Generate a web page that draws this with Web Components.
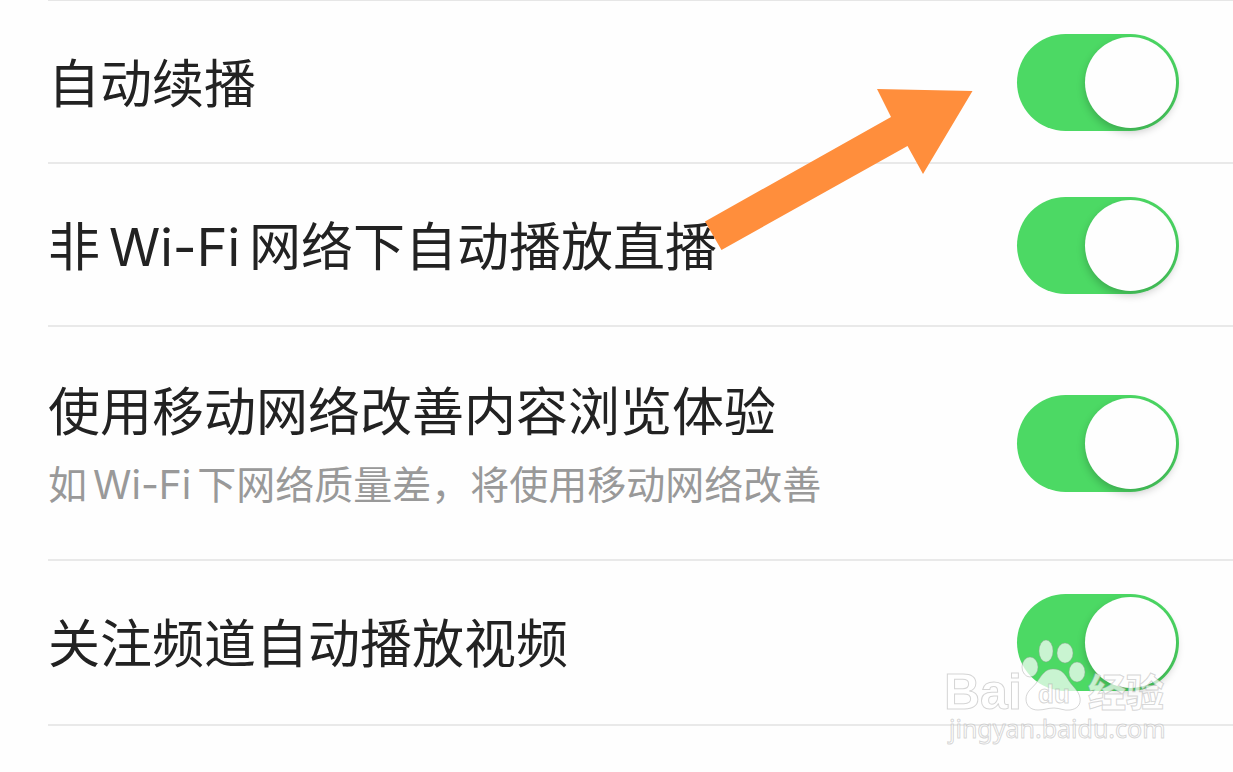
<!DOCTYPE html>
<html lang="zh-CN">
<head>
<meta charset="utf-8">
<meta name="viewport" content="width=device-width, initial-scale=1">
<title>播放设置</title>
<style>
  body { margin: 0; background: #fefefe; color: #222; font-family: Inter, "Noto Sans CJK SC", sans-serif; }
</style>
</head>
<body>
<settings-page>
  <setting-row>自动续播</setting-row>
  <setting-row>非<latin-word>Wi-Fi</latin-word>网络下自动播放直播</setting-row>
  <setting-row size="tall">使用移动网络改善内容浏览体验<span slot="note">如<latin-word>Wi-Fi</latin-word>下网络质量差，将使用移动网络改善</span></setting-row>
  <setting-row>关注频道自动播放视频</setting-row>
  <pointer-arrow slot="overlay"></pointer-arrow>
  <site-watermark slot="overlay"></site-watermark>
</settings-page>

<script>
function define(name, html) {
  const template = document.createElement('template');
  template.innerHTML = html.trim();
  customElements.define(name, class extends HTMLElement {
    constructor() {
      super();
      this.attachShadow({ mode: 'open' }).append(template.content.cloneNode(true));
    }
  });
}

define('settings-page', `
  <style>
    :host { display: block; position: relative; overflow: hidden; }
    main { display: flex; flex-direction: column; margin-left: 48px; padding-bottom: 24px; border-top: 1px solid #e6e6e6; }
  </style>
  <main><slot></slot></main>
  <slot name="overlay"></slot>
`);

define('latin-word', `<style>:host { display: inline; margin: 0 var(--latin-gap, 9px); }</style><slot></slot>`);

define('setting-row', `
  <style>
    :host { display: block; border-bottom: 2px solid #e9e9e9; }
    label { display: flex; align-items: center; justify-content: space-between; gap: 24px; box-sizing: border-box; min-height: 161px; padding: 2px 54px 0 0; }
    :host([size="tall"]) label { min-height: 232px; padding-top: 0; }
    :host(:last-of-type) label { min-height: 163px; padding-top: 0; }
    .text { display: flex; flex-direction: column; padding-top: 4px; }
    .title { font-size: 52px; line-height: 72px; }
    .note { font-size: 39px; line-height: 56px; color: #999; --latin-gap: 6px; }
    ::slotted([slot="note"]) { display: block; padding-top: 8px; }
    input {
      appearance: none; flex: none; display: flex; justify-content: flex-end;
      box-sizing: border-box; width: 162px; height: 97px; margin: 0; padding: 3px;
      border-radius: 49px; background: #ddd;
    }
    input::before {
      content: ""; width: 91px; height: 91px; border-radius: 50%; background: #fefefe;
      box-shadow: 0 4px 8px rgba(0, 0, 0, .22);
    }
    input:checked { background: #4cd964; }
    input:not(:checked) { justify-content: flex-start; }
  </style>
  <label>
    <span class="text">
      <span class="title"><slot></slot></span>
      <span class="note"><slot name="note"></slot></span>
    </span>
    <input type="checkbox" role="switch" checked>
  </label>
`);

define('pointer-arrow', `
  <style>
    :host { position: absolute; top: 88px; right: 260px; pointer-events: none; }
    svg { display: block; }
  </style>
  <svg width="270" height="164" viewBox="703 88 270 164" aria-hidden="true">
    <path fill="#ff8e3c" d="M877 89 972.500 91 923 174 907.500 146 721.500 250 705 221.500 891 117Z"/>
  </svg>
`);

define('site-watermark', `
  <style>
    :host { position: absolute; top: 636px; right: 63px; pointer-events: none; }
    svg { display: block; overflow: visible; }
    g { fill: #fff; fill-opacity: .7; stroke: #999; stroke-opacity: .4; stroke-width: 1; }
    .logo { font: bold 50px "Liberation Sans", sans-serif; }
    .du { font: bold 26px "Liberation Sans", sans-serif; }
    .cjk { font: 900 38px "Noto Sans CJK SC", sans-serif; }
    .url { font: 25px "Noto Sans", sans-serif; }
  </style>
  <svg width="226" height="112" viewBox="944 636 226 112">
    <g>
      <text class="logo" x="944" y="709">Bai</text>
      <ellipse cx="1030" cy="667" rx="8" ry="10"/>
      <ellipse cx="1046" cy="651" rx="7" ry="11"/>
      <ellipse cx="1065" cy="653" rx="8" ry="10"/>
      <ellipse cx="1077" cy="672" rx="8" ry="10"/>
      <path d="M1053 669C1045 669 1042 675 1037 682C1033 688 1026 691 1026 699C1026 706 1031 710 1038 710C1044 710 1048 708 1054 708C1060 708 1064 711 1070 710C1077 709 1081 705 1080 698C1079 691 1073 687 1069 681C1065 674 1062 669 1053 669Z"/>
      <text class="du" x="1038" y="703">du</text>
      <text class="cjk" x="1088" y="706">经验</text>
      <text class="url" x="949" y="738">jingyan.baidu.com</text>
    </g>
  </svg>
`);
</script>
</body>
</html>
